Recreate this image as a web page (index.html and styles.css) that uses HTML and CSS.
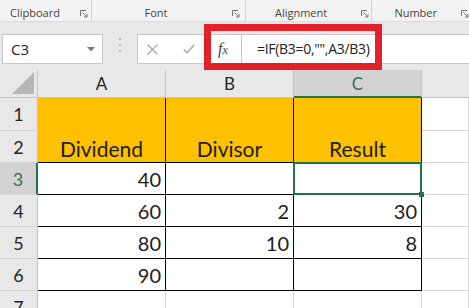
FILE: index.html
```html
<!DOCTYPE html>
<html lang="en">
<head>
    <meta charset="UTF-8">
    <meta name="viewport" content="width=device-width, initial-scale=1.0">
    <title>Excel - IF divide</title>
    <link rel="stylesheet" href="styles.css">
</head>
<body>
    <div class="ribbon">
        <div class="group group-clipboard">
            <span class="group-label">Clipboard</span>
            <svg class="launcher" width="8" height="8" viewBox="0 0 8 8"><path d="M0.5 6V0.5H6 M2.5 2.5L7 7 M7 4V7H4" fill="none" stroke="#777" stroke-width="1"/></svg>
        </div>
        <div class="group group-font">
            <span class="group-label">Font</span>
            <svg class="launcher" width="8" height="8" viewBox="0 0 8 8"><path d="M0.5 6V0.5H6 M2.5 2.5L7 7 M7 4V7H4" fill="none" stroke="#777" stroke-width="1"/></svg>
        </div>
        <div class="group group-align">
            <span class="group-label">Alignment</span>
            <svg class="launcher" width="8" height="8" viewBox="0 0 8 8"><path d="M0.5 6V0.5H6 M2.5 2.5L7 7 M7 4V7H4" fill="none" stroke="#777" stroke-width="1"/></svg>
        </div>
        <div class="group group-number">
            <span class="group-label">Number</span>
            <svg class="launcher" width="8" height="8" viewBox="0 0 8 8"><path d="M0.5 6V0.5H6 M2.5 2.5L7 7 M7 4V7H4" fill="none" stroke="#777" stroke-width="1"/></svg>
        </div>
    </div>

    <div class="formula-bar">
        <div class="name-box">
            <span>C3</span>
            <svg class="name-arrow" width="8" height="5" viewBox="0 0 8 5"><path d="M0 0H8L4 4.5Z" fill="#7a7a7a"/></svg>
        </div>
        <div class="grip">
            <svg width="4" height="16" viewBox="0 0 4 16"><circle cx="2" cy="2" r="1.1" fill="#aaa"/><circle cx="2" cy="8" r="1.1" fill="#aaa"/><circle cx="2" cy="14" r="1.1" fill="#aaa"/></svg>
        </div>
        <div class="edit-box">
            <div class="edit-tools">
                <svg class="btn-cancel" width="11" height="11" viewBox="0 0 11 11"><path d="M0.5 0.5L10.5 10.5M10.5 0.5L0.5 10.5" stroke="#a8a8a8" stroke-width="1.3"/></svg>
                <svg class="btn-enter" width="12" height="10" viewBox="0 0 12 10"><path d="M0.8 5.5L4 8.8L11.3 0.8" fill="none" stroke="#a8a8a8" stroke-width="1.4"/></svg>
                <span class="fx">f<span class="fx-x">x</span></span>
            </div>
            <div class="formula">=IF(B3=0,"",A3/B3)</div>
        </div>
        <div class="callout"></div>
    </div>

    <div class="sheet">
        <div class="corner">
            <svg width="22" height="22" viewBox="0 0 22 22"><path d="M22 0V22H0Z" fill="#b6b6b6"/></svg>
        </div>
        <div class="col-head">A</div>
        <div class="col-head">B</div>
        <div class="col-head sel">C</div>
        <div class="col-head last"></div>

        <div class="row-head">1</div>
        <div class="cell tbl title">Dividend</div>
        <div class="cell tbl title">Divisor</div>
        <div class="cell tbl title">Result</div>
        <div class="cell"></div>

        <div class="row-head">2</div>
        <div class="cell"></div>

        <div class="row-head sel">3</div>
        <div class="cell tbl num">40</div>
        <div class="cell tbl num"></div>
        <div class="cell tbl num active"></div>
        <div class="cell"></div>

        <div class="row-head">4</div>
        <div class="cell tbl num">60</div>
        <div class="cell tbl num">2</div>
        <div class="cell tbl num">30</div>
        <div class="cell"></div>

        <div class="row-head">5</div>
        <div class="cell tbl num">80</div>
        <div class="cell tbl num">10</div>
        <div class="cell tbl num">8</div>
        <div class="cell"></div>

        <div class="row-head">6</div>
        <div class="cell tbl num">90</div>
        <div class="cell tbl num"></div>
        <div class="cell tbl num"></div>
        <div class="cell"></div>

        <div class="row-head">7</div>
        <div class="cell"></div>
        <div class="cell"></div>
        <div class="cell"></div>
        <div class="cell"></div>
    </div>
</body>
</html>
```

FILE: styles.css
```css
/* Feuille Excel : formule SI pour éviter la division par zéro */
body {
    margin: 0;
    width: 469px;
    height: 308px;
    overflow: hidden;
    background-color: #ffffff;
    font-family: 'Open Sans', sans-serif;
}

/* Ruban */
.ribbon {
    display: flex;
    height: 22px;
    box-sizing: border-box;
    background-color: #f3f3f3;
    border-bottom: 1px solid #dcdcdc;
}

.group {
    display: flex;
    align-items: flex-end;
    height: 21px;
    box-sizing: border-box;
    border-right: 1px solid #d2d2d2;
    position: relative;
}

.group-label {
    font-size: 11px;
    line-height: 14px;
    color: #444444;
    padding-bottom: 1px;
}

.launcher {
    margin-bottom: 3px;
}

.group-clipboard {
    width: 92px;
    padding-left: 10px;
}

.group-clipboard .launcher {
    margin-left: 20px;
}

.group-font {
    width: 155px;
    padding-left: 53px;
}

.group-font .launcher {
    margin-left: 64px;
}

.group-align {
    width: 127px;
    padding-left: 29px;
}

.group-align .launcher {
    margin-left: 34px;
}

.group-number {
    flex: 1;
    padding-left: 22px;
    border-right: none;
}

.group-number .launcher {
    margin-left: 24px;
}

/* Barre de formule */
.formula-bar {
    position: relative;
    display: flex;
    align-items: flex-start;
    height: 48px;
    box-sizing: border-box;
    padding-top: 12px;
    background-color: #e8e8e8;
}

.name-box {
    display: flex;
    align-items: center;
    justify-content: space-between;
    width: 101px;
    height: 30px;
    margin-left: 2px;
    box-sizing: border-box;
    padding: 0 7px 0 8px;
    background-color: #ffffff;
    border: 1px solid #c8c8c8;
    font-size: 15px;
    color: #222222;
}

.grip {
    display: flex;
    justify-content: center;
    width: 34px;
    padding-top: 3px;
}

.edit-box {
    flex: 1;
    display: flex;
    height: 30px;
    box-sizing: border-box;
    background-color: #ffffff;
    border: 1px solid #c8c8c8;
    border-right: none;
}

.edit-tools {
    display: flex;
    align-items: center;
    width: 104px;
    box-sizing: border-box;
    padding-left: 9px;
    border-right: 1px solid #c8c8c8;
}

.btn-enter {
    margin-left: 25px;
}

.fx {
    margin-left: 23px;
    font-family: 'Liberation Serif', serif;
    font-style: italic;
    font-size: 16px;
    color: #444444;
}

.fx-x {
    font-size: 12px;
}

.formula {
    padding-left: 15px;
    font-size: 14px;
    line-height: 28px;
    color: #222222;
    letter-spacing: -0.3px;
}

.callout {
    position: absolute;
    left: 204px;
    top: 2px;
    width: 178px;
    height: 46px;
    box-sizing: border-box;
    border: 7px solid #e3212b;
}

/* Grille */
.sheet {
    display: grid;
    grid-template-columns: 38px 128px 128px 128px 1fr;
    grid-template-rows: 28px 33px repeat(6, 32px);
    font-family: 'Lato', sans-serif;
}

.corner {
    display: flex;
    align-items: flex-end;
    justify-content: flex-end;
    padding: 0 3px 3px 0;
    background-color: #e8e8e8;
    border-right: 1px solid #c4c4c4;
    border-bottom: 1px solid #c4c4c4;
}

.col-head {
    display: flex;
    align-items: center;
    justify-content: center;
    background-color: #e8e8e8;
    border-right: 1px solid #c4c4c4;
    border-bottom: 1px solid #c4c4c4;
    font-size: 17px;
    color: #262626;
}

.col-head.last {
    border-right: none;
}

.row-head {
    display: flex;
    align-items: center;
    justify-content: center;
    background-color: #e8e8e8;
    border-right: 1px solid #c4c4c4;
    border-bottom: 1px solid #d4d4d4;
    font-size: 18px;
    color: #262626;
}

.col-head.sel {
    background-color: #d3d3d3;
    border-bottom: 2px solid #217346;
    color: #3e6d56;
}

.row-head.sel {
    background-color: #d3d3d3;
    border-right: 2px solid #217346;
    color: #3e6d56;
}

.cell {
    display: flex;
    align-items: flex-end;
    border-right: 1px solid #d9d9d9;
    border-bottom: 1px solid #d9d9d9;
    font-size: 20px;
    color: #1c1c1c;
}

.cell.tbl {
    border-color: #000000;
}

.title {
    grid-row: span 2;
    justify-content: center;
    padding-bottom: 1px;
    background-color: #ffc000;
    font-size: 21px;
}

.num {
    justify-content: flex-end;
    padding: 0 4px 3px 0;
}

.active {
    position: relative;
}

.active::after {
    content: '';
    position: absolute;
    left: -1px;
    top: -1px;
    right: -1px;
    bottom: -1px;
    border: 2px solid #217346;
    z-index: 2;
}

.active::before {
    content: '';
    position: absolute;
    right: -3px;
    bottom: -3px;
    width: 5px;
    height: 5px;
    background-color: #217346;
    z-index: 3;
}
```
